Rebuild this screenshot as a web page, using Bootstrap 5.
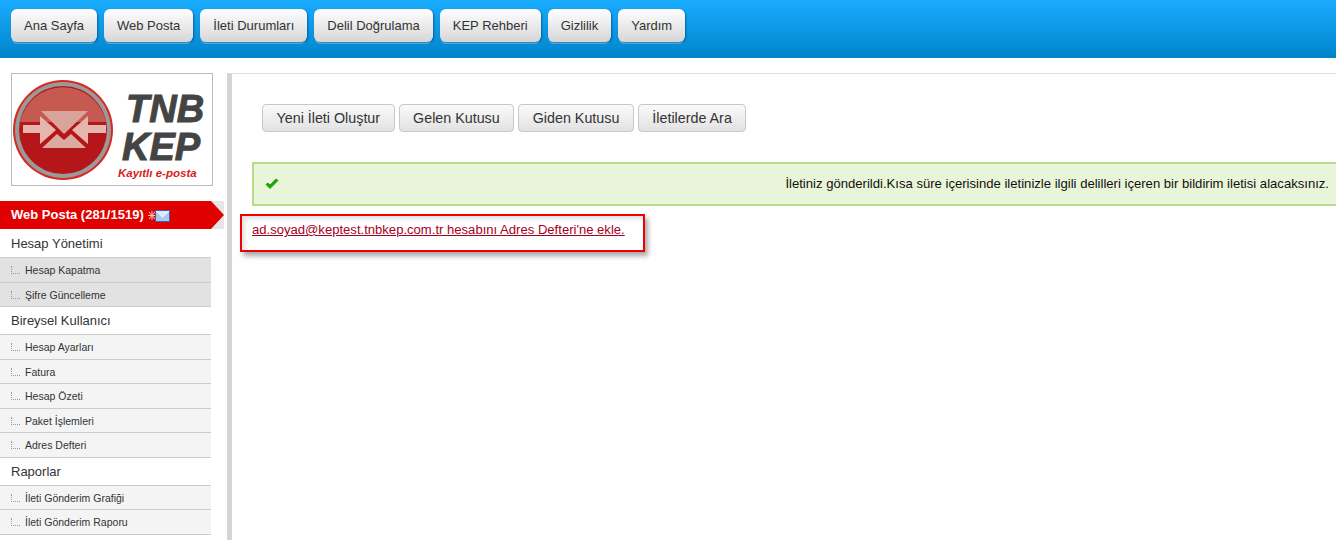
<!DOCTYPE html>
<html lang="tr">
<head>
    <meta charset="UTF-8">
    <meta name="viewport" content="width=device-width, initial-scale=1.0">
    <title>TNB KEP</title>
    <link href="https://cdn.jsdelivr.net/npm/bootstrap@5.3.0/dist/css/bootstrap.min.css" rel="stylesheet">
    <style>
        html, body { height: 540px; overflow: hidden; }
        body { font-family: "Liberation Sans", Arial, sans-serif; font-size: 14px; color: #333; background: #fff; }
        .top-bar { height: 58px; padding: 9px 11px 0; gap: 7px; background: linear-gradient(#1aacff, #0084cb); }
        .top-btn { height: 33px; padding: 0 13px; line-height: 34px; font-size: 13px; color: #333; border: 0; border-radius: 6px;
            background: linear-gradient(#fff, #d6d6d6); box-shadow: 1px 1px 2px rgba(0,60,110,.6), 0 3px 0 -1px #5cc0f0; }
        .page-body { padding-top: 15px; height: 482px; }
        .side-col { width: 227px; flex: none; }
        .logo-box { width: 202px; height: 113px; margin-left: 11px; border: 1px solid #bbb; background: #fff; }
        .web-posta { margin-top: 15px; height: 28px; width: 224px; background: #e6e6e6; position: relative; }
        .web-posta-in { height: 28px; width: 224px; padding-left: 11px; gap: 4px; background: #e00000; color: #fff; font-weight: 700; font-size: 13px;
            clip-path: polygon(0 0, 211px 0, 224px 14px, 211px 28px, 0 28px); }
        .side-menu { width: 211px; padding-top: 1px; }
        .menu-head { height: 28px; padding: 0 0 0 11px; line-height: 28px; font-size: 13px; color: #333; background: #fff; border-bottom: 1px solid #ccc; }
        .menu-sub { height: 24.5px; line-height: 24px; padding-left: 25px; font-size: 10.5px; color: #333; background: #f4f4f4; border-bottom: 1px solid #ccc; position: relative; }
        .menu-sub.dark { background: #e2e2e2; }
        .menu-sub::before { content: ""; position: absolute; left: 11px; top: 8px; width: 9px; height: 8px; border-left: 1px dotted #999; border-bottom: 1px dotted #999; }
        .main-panel { flex: 1; min-width: 0; border-left: 5px solid #d4d4d4; border-top: 1px solid #ddd; padding: 30px 0 0 20px; }
        .tool-row { padding-left: 10px; gap: 4px; }
        .tool-btn { height: 28px; padding: 0 13.5px; font-size: 14.3px; line-height: 26px; color: #333; border: 1px solid #c8c8c8; border-radius: 4px; background: linear-gradient(#fafafa, #e2e2e2); }
        .ok-box { margin: 30px -3px 0 0; height: 44px; padding: 0 8px 0 11px; border: 2px solid #b8dc8a; background: #e9f5d8; color: #111; font-size: 13.1px; }
        .note-box { margin: 8px 0 0 -12px; width: 405px; height: 38px; padding: 3px 0 0 10px; border: 2px solid #f00000; box-shadow: 3px 4px 5px rgba(0,0,0,.35), inset 3px 3px 4px rgba(0,0,0,.12); }
        .note-box a { color: #a50021; font-size: 13.08px; }
    </style>
</head>
<body>
    <div class="top-bar d-flex align-items-start">
        <a class="top-btn text-decoration-none" href="#">Ana Sayfa</a>
        <a class="top-btn text-decoration-none" href="#">Web Posta</a>
        <a class="top-btn text-decoration-none" href="#">İleti Durumları</a>
        <a class="top-btn text-decoration-none" href="#">Delil Doğrulama</a>
        <a class="top-btn text-decoration-none" href="#">KEP Rehberi</a>
        <a class="top-btn text-decoration-none" href="#">Gizlilik</a>
        <a class="top-btn text-decoration-none" href="#">Yardım</a>
    </div>
    <div class="page-body d-flex">
        <div class="side-col">
            <div class="logo-box">
                <svg width="200" height="111" viewBox="0 0 200 111">
                    <circle cx="51" cy="56" r="50" fill="#d8281f"/>
                    <circle cx="51" cy="56" r="48" fill="#9a9a9a"/>
                    <circle cx="51" cy="56" r="44" fill="#b5161a"/>
                    <path d="M8 48A44 44 0 0 1 94 48Z" fill="#c75a50"/>
                    <path d="M11 51H28V42L44 56 28 70V59H11Z" fill="#e6b6ae"/>
                    <path d="M94 51H76V42L60 56 76 70V59H94Z" fill="#e6b6ae"/>
                    <path d="M29 37H76L52 60Z" fill="#d9a49a"/>
                    <path d="M30 74H74L59 60 52 66 45 60Z" fill="#dcaaa0"/>
                    <text x="114" y="48" font-family="Liberation Sans, sans-serif" font-weight="700" font-style="italic" font-size="38" stroke="#444" stroke-width="1" fill="#444">TNB</text>
                    <text x="110" y="86" font-family="Liberation Sans, sans-serif" font-weight="700" font-style="italic" font-size="38" stroke="#444" stroke-width="1" fill="#444">KEP</text>
                    <text x="106" y="103" font-family="Liberation Sans, sans-serif" font-weight="700" font-style="italic" font-size="11.5" fill="#d8201a">Kayıtlı e-posta</text>
                </svg>
            </div>
            <div class="web-posta">
                <div class="web-posta-in d-flex align-items-center">
                    <span>Web Posta (281/1519)</span>
                    <svg width="22" height="13" viewBox="0 0 22 13">
                        <path d="M1 3L7 10M7 3L1 10M4 2V11M0 6.5H8" stroke="#ffc9a8" stroke-width="1"/>
                        <rect x="7.5" y="1.5" width="14" height="11" fill="#a9c8f2" stroke="#3a62b0"/>
                        <path d="M8 2L14.5 8 21 2" fill="#dfeafb" stroke="#fff"/>
                    </svg>
                </div>
            </div>
            <div class="side-menu">
                <div class="menu-head">Hesap Yönetimi</div>
                <div class="menu-sub dark">Hesap Kapatma</div>
                <div class="menu-sub dark">Şifre Güncelleme</div>
                <div class="menu-head">Bireysel Kullanıcı</div>
                <div class="menu-sub">Hesap Ayarları</div>
                <div class="menu-sub">Fatura</div>
                <div class="menu-sub">Hesap Özeti</div>
                <div class="menu-sub">Paket İşlemleri</div>
                <div class="menu-sub">Adres Defteri</div>
                <div class="menu-head">Raporlar</div>
                <div class="menu-sub">İleti Gönderim Grafiği</div>
                <div class="menu-sub">İleti Gönderim Raporu</div>
            </div>
        </div>
        <div class="main-panel">
            <div class="tool-row d-flex">
                <a class="tool-btn text-decoration-none" href="#">Yeni İleti Oluştur</a>
                <a class="tool-btn text-decoration-none" href="#">Gelen Kutusu</a>
                <a class="tool-btn text-decoration-none" href="#">Giden Kutusu</a>
                <a class="tool-btn text-decoration-none" href="#">İletilerde Ara</a>
            </div>
            <div class="ok-box d-flex align-items-center justify-content-between">
                <svg width="14" height="12" viewBox="0 0 14 12"><path d="M1 6.5L5 10.5 13 2.5 11 1 5 7 3 5Z" fill="#1fa30f" stroke="#1fa30f"/></svg>
                <span>İletiniz gönderildi.Kısa süre içerisinde iletinizle ilgili delilleri içeren bir bildirim iletisi alacaksınız.</span>
            </div>
            <div class="note-box">
                <a href="#">ad.soyad@keptest.tnbkep.com.tr hesabını Adres Defteri'ne ekle.</a>
            </div>
        </div>
    </div>
    <script src="https://cdn.jsdelivr.net/npm/bootstrap@5.3.0/dist/js/bootstrap.bundle.min.js"></script>
</body>
</html>
